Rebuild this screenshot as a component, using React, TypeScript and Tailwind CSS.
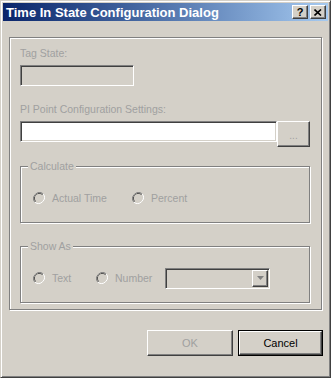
const raised =
  "border border-t-white border-l-white border-r-[#404040] border-b-[#404040] shadow-[inset_-1px_-1px_0_#808080]";
const sunken =
  "border border-t-[#808080] border-l-[#808080] border-r-white border-b-white shadow-[inset_1px_1px_0_#404040,inset_-1px_-1px_0_#d4d0c8]";
const etched =
  "border border-[#808080] shadow-[inset_1px_1px_0_#fff,1px_1px_0_#fff]";

function Radio({ label, gap }: { label: string; gap: string }) {
  return (
    <div className={`flex items-center ${gap}`}>
      <svg width="12" height="12" viewBox="0 0 12 12" className="shrink-0">
        <path d="M10.2 1.8 A6 6 0 0 0 1.8 10.2" fill="none" stroke="#808080" strokeWidth="1" />
        <path d="M9.5 2.5 A5 5 0 0 0 2.5 9.5" fill="none" stroke="#404040" strokeWidth="1" />
        <path d="M1.8 10.2 A6 6 0 0 0 10.2 1.8" fill="none" stroke="#ffffff" strokeWidth="1" />
        <circle cx="6" cy="6" r="4" fill="#d4d0c8" />
      </svg>
      <span className="text-[#a0a0a0]">{label}</span>
    </div>
  );
}

function GroupBox({ title, children }: { title: string; children: React.ReactNode }) {
  return (
    <div className={`relative h-[57px] w-[290px] ${etched}`}>
      <span className="absolute -top-[8px] left-[7px] bg-[#d4d0c8] px-[2px] leading-[14px] text-[#a0a0a0]">
        {title}
      </span>
      {children}
    </div>
  );
}

export default function App() {
  return (
    <div
      className="w-[331px] h-[378px] bg-[#d4d0c8] text-[10.5px] leading-[13px] border border-t-[#d4d0c8] border-l-[#d4d0c8] border-r-[#404040] border-b-[#404040] shadow-[inset_1px_1px_0_#fff,inset_-1px_-1px_0_#808080] p-[2px] flex flex-col"
      style={{ fontFamily: '"Liberation Sans", Arial, sans-serif' }}
    >
      {/* Title bar */}
      <div className="h-[18px] flex items-center bg-gradient-to-r from-[#0a246a] to-[#a6caf0] pl-[3px] pr-[2px]">
        <span className="text-white font-bold text-[13px] leading-none flex-1">Time In State Configuration Dialog</span>
        <div className="flex gap-[2px]">
          <div className={`w-[16px] h-[14px] bg-[#d4d0c8] flex items-center justify-center ${raised}`}>
            <span className="font-bold text-[11px] leading-none text-black">?</span>
          </div>
          <div className={`w-[16px] h-[14px] bg-[#d4d0c8] flex items-center justify-center ${raised}`}>
            <svg width="8" height="7" viewBox="0 0 8 7">
              <path d="M0.5 0.5 L7 6.5 M7 0.5 L0.5 6.5" stroke="#000" strokeWidth="1.6" />
            </svg>
          </div>
        </div>
      </div>

      {/* Main group */}
      <div className={`mt-[16px] mx-[6px] h-[273px] ${etched} pl-[10px] pt-[9px]`}>
        <div className="text-[#a0a0a0]">Tag State:</div>
        <div className={`mt-[5px] w-[114px] h-[21px] bg-[#d4d0c8] ${sunken}`} />

        <div className="mt-[17px] text-[#a0a0a0]">PI Point Configuration Settings:</div>
        <div className="mt-[5px] flex items-start">
          <div className={`w-[257px] h-[21px] bg-white ${sunken}`} />
          <div className={`w-[33px] h-[26px] bg-[#d4d0c8] flex items-center justify-center ${raised}`}>
            <span className="text-[#a0a0a0] text-[10px] leading-none pt-[4px]">...</span>
          </div>
        </div>

        <div className="mt-[19px]">
          <GroupBox title="Calculate">
            <div className="flex items-center h-full pl-[12px] pt-[7px]">
              <Radio label="Actual Time" gap="gap-[7px] w-[99px]" />
              <Radio label="Percent" gap="gap-[7px]" />
            </div>
          </GroupBox>
        </div>

        <div className="mt-[23px]">
          <GroupBox title="Show As">
            <div className="flex items-center h-full pl-[12px] pt-[7px]">
              <Radio label="Text" gap="gap-[7px] w-[63px]" />
              <Radio label="Number" gap="gap-[7px] w-[69px]" />
              <div className={`w-[105px] h-[21px] bg-[#d4d0c8] flex justify-end items-stretch p-[1px] ${sunken}`}>
                <div className={`w-[16px] bg-[#d4d0c8] flex items-center justify-center ${raised}`}>
                  <svg width="7" height="4" viewBox="0 0 7 4">
                    <path d="M0 0 H7 L3.5 4 Z" fill="#808080" />
                  </svg>
                </div>
              </div>
            </div>
          </GroupBox>
        </div>
      </div>

      {/* Buttons */}
      <div className="mt-[20px] flex justify-end gap-[5px] pr-[5px]">
        <div className={`w-[86px] h-[26px] flex items-center justify-center text-[11px] text-[#a0a0a0] ${raised}`}>OK</div>
        <div className="w-[85px] h-[26px] border border-black">
          <div className={`w-full h-full flex items-center justify-center text-[11px] text-black ${raised}`}>Cancel</div>
        </div>
      </div>
    </div>
  );
}
